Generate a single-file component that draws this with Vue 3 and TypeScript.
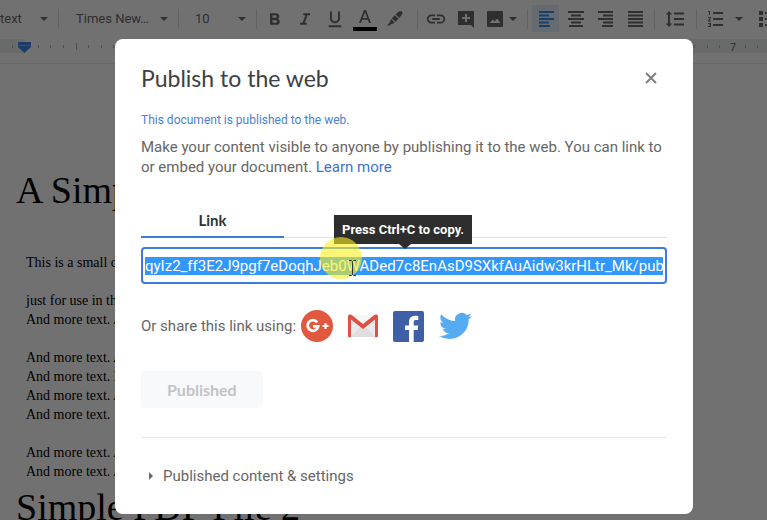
<script setup lang="ts">
import { onMounted, ref } from 'vue'

const linkField = ref<HTMLInputElement | null>(null)
const activeTab = ref<'link' | 'embed'>('link')
const settingsOpen = ref(false)
const link = 'qyIz2_ff3E2J9pgf7eDoqhJeb0WADed7c8EnAsD9SXkfAuAidw3krHLtr_Mk/pub'

const lines: string[] = [
  'This is a small demonstration .pdf file -',
  '',
  'just for use in the Virtual Mechanics tutorials.',
  'And more text. And more text.',
  '',
  'And more text. And more text.',
  'And more text. Boring, zzzzz.',
  'And more text. And more text.',
  'And more text.',
  '',
  'And more text. And more text.',
  'And more text. And more text.',
]

/* Ruler ticks: eighths of an inch, with the half inch drawn taller. */
const inch = 101
const ticks = Array.from({ length: 70 }, (_, i) => i - 1)
  .filter((n) => n % 8 !== 0)
  .map((n) => ({ x: Math.round(25 + (n * inch) / 8), tall: n % 4 === 0 }))

onMounted(() => {
  linkField.value?.focus()
  linkField.value?.select()
})
</script>

<template>
  <div class="editor">
    <div class="toolbar" role="toolbar" aria-label="Formatting">
      <button class="drop style"><span>text</span><i class="caret"></i></button>
      <button class="drop font"><span>Times New…</span><i class="caret"></i></button>
      <button class="drop size"><span>10</span><i class="caret"></i></button>
      <div class="group">
        <button class="tool" aria-label="Bold">
          <svg width="20" height="20" viewBox="0 0 24 24"><path d="M15.6 11.8c1-.7 1.6-1.8 1.6-2.8 0-2.3-1.7-4-4-4H6v14h8c2.1 0 3.7-1.700 3.700-3.800 0-1.500-.9-2.800-2.100-3.400zM9 7.500h3.500c.8 0 1.500.7 1.500 1.500s-.7 1.500-1.500 1.500H9v-3zm4 9H9v-3h4c.8 0 1.500.7 1.500 1.500s-.7 1.500-1.500 1.500z" /></svg>
        </button>
        <button class="tool" aria-label="Italic">
          <svg width="20" height="20" viewBox="0 0 24 24"><path d="M10 5v2.500h2.500l-3.400 9H6V19h8v-2.500h-2.300l3.400-9H18V5z" /></svg>
        </button>
        <button class="tool" aria-label="Underline">
          <svg width="20" height="22" viewBox="0 0 24 26"><path d="M12 18c3.300 0 6-2.700 6-6V4h-2.300v8c0 2.100-1.600 3.800-3.700 3.800S8.300 14.100 8.300 12V4H6v8c0 3.300 2.700 6 6 6zM4.500 20.500v2.300h15v-2.300z" /></svg>
        </button>
        <button class="tool" aria-label="Text colour">
          <svg width="24" height="26" viewBox="0 0 24 26"><path d="M11 4 6 17h2l1.200-3.200h5.600L16 17h2L13 4zm-1.100 8L12 6.300 14.100 12z" /><path class="ink" d="M0 21h24v4H0z" /></svg>
        </button>
        <button class="tool" aria-label="Highlight colour">
          <svg width="18" height="18" viewBox="0 0 18 18"><path d="M12.800 1.600a2.200 2.200 0 0 1 3.200 3l-2.800 3.400-3.600-3.500zM8.800 5.200l3.700 3.600-3 3-3.800-3.600zM5 9l3.600 3.500-1.700 1.300-2 .1-1 1.500H1l2.700-3z" /></svg>
        </button>
      </div>
      <div class="group">
        <button class="tool" aria-label="Insert link">
          <svg width="22" height="22" viewBox="0 0 24 24"><path d="M3.900 12c0-1.700 1.400-3.100 3.100-3.100h4V7H7a5 5 0 0 0 0 10h4v-1.900H7c-1.700 0-3.100-1.400-3.100-3.100zM8 13h8v-2H8zm9-6h-4v1.900h4a3.100 3.100 0 0 1 0 6.200h-4V17h4a5 5 0 0 0 0-10z" /></svg>
        </button>
        <button class="tool" aria-label="Add comment">
          <svg width="18" height="18" viewBox="0 0 18 18"><path fill-rule="evenodd" d="M1 1h16v17l-3-3H1zM8 4v3H5v2h3v3h2V9h3V7h-3V4z" /></svg>
        </button>
        <button class="tool tight" aria-label="Insert image">
          <svg width="18" height="18" viewBox="0 0 18 18"><path fill-rule="evenodd" d="M2 1h14a1 1 0 0 1 1 1v14a1 1 0 0 1-1 1H2a1 1 0 0 1-1-1V2a1 1 0 0 1 1-1zM3.500 13h11l-3.300-4.500-2.400 3L7 9.500z" /></svg>
        </button>
        <i class="caret trailing"></i>
      </div>
      <div class="group aligns">
        <button class="tool on" aria-label="Align left" aria-pressed="true">
          <svg width="16" height="16" viewBox="0 0 16 16"><path d="M1 0h15v2H1zM1 3.500h10v2H1zM1 7h15v2H1zM1 10.500h10v2H1zM1 14h11v2H1z" /></svg>
        </button>
        <button class="tool" aria-label="Align centre">
          <svg width="16" height="16" viewBox="0 0 16 16"><path d="M0 0h16v2H0zM3 3.500h10v2H3zM0 7h16v2H0zM3 10.500h10v2H3zM1 14h14v2H1z" /></svg>
        </button>
        <button class="tool" aria-label="Align right">
          <svg width="16" height="16" viewBox="0 0 16 16"><path d="M0 0h15v2H0zM5 3.500h10v2H5zM0 7h15v2H0zM5 10.500h10v2H5zM4 14h11v2H4z" /></svg>
        </button>
        <button class="tool" aria-label="Justify">
          <svg width="16" height="16" viewBox="0 0 16 16"><path d="M0 0h15v2H0zM0 3.500h15v2H0zM0 7h15v2H0zM0 10.500h15v2H0zM0 14h15v2H0z" /></svg>
        </button>
      </div>
      <div class="group spacing">
        <button class="tool" aria-label="Line spacing">
          <svg width="20" height="18" viewBox="0 0 20 18"><path d="M4 1 .8 4.500H3v9H.8L4 17l3.200-3.500H5v-9h2.200zM9 2.500h10v2H9zM9 8h10v2H9zM9 13.500h10v2H9z" /></svg>
        </button>
      </div>
      <div class="group lists">
        <button class="tool" aria-label="Numbered list">
          <svg width="18" height="16" viewBox="0 0 18 16"><path d="M1 0h2v4H2V1H1zM1 6h3v1L2.300 9.500H4v1H1v-1L2.800 7H1zM1 12h3v4H1v-1h2v-.5H2v-1h1V13H1zM6 1h10v2H6zM6 7h10v2H6zM6 13h10v2H6z" /></svg>
        </button>
        <i class="caret trailing"></i>
        <button class="tool" aria-label="Bulleted list">
          <svg width="18" height="16" viewBox="0 0 18 16"><path d="M0 0h4v4H0zM0 6h4v4H0zM0 12h4v4H0zM6 1h10v2H6zM6 7h10v2H6zM6 13h10v2H6z" /></svg>
        </button>
      </div>
    </div>

    <svg class="ruler" height="14" aria-hidden="true">
      <rect class="margin" width="100%" height="14" />
      <rect class="area" x="25" width="606" height="14" />
      <rect v-for="t in ticks" :key="t.x" class="tick" :x="t.x" :y="t.tall ? 4 : 6" width="1" :height="t.tall ? 7 : 3" />
      <text x="730" y="12">7</text>
      <path class="indent" d="M18 3h13v5l-6.500 6L18 8z" />
      <path class="indent-gap" d="M18 6h13v1H18z" />
    </svg>

    <main class="page">
      <h1>A Simple PDF File</h1>
      <div class="copy">
        <p v-for="(line, i) in lines" :key="i">{{ line }}</p>
      </div>
      <h1>Simple PDF File 2</h1>
    </main>
  </div>

  <div class="backdrop">
    <section class="dialog" role="dialog" aria-modal="true" aria-labelledby="publish-title">
      <header>
        <h2 id="publish-title">Publish to the web</h2>
        <button class="close" aria-label="Close">
          <svg width="12" height="12" viewBox="0 0 12 12"><path d="M1 1l10 10M11 1 1 11" /></svg>
        </button>
      </header>
      <p class="status">This document is published to the web.</p>
      <p class="intro">
        Make your content visible to anyone by publishing it to the web. You can link to or embed your document.
        <a href="#learn">Learn more</a>
      </p>

      <div class="tabs" role="tablist">
        <button role="tab" :class="{ active: activeTab === 'link' }" :aria-selected="activeTab === 'link'" @click="activeTab = 'link'">Link</button>
        <button role="tab" :class="{ active: activeTab === 'embed' }" :aria-selected="activeTab === 'embed'" @click="activeTab = 'embed'">Embed</button>
      </div>

      <div class="field">
        <input ref="linkField" type="text" readonly :value="link" aria-label="Published link" />
        <div class="tip" role="tooltip">Press Ctrl+C to copy.</div>
        <div class="halo"></div>
        <svg class="ibeam" width="9" height="18" viewBox="0 0 9 18" aria-hidden="true"><path d="M1 1.500h2.500l1 1 1-1H8M4.500 2.500v13M1 16.500h2.500l1-1 1 1H8" /></svg>
      </div>

      <div class="share">
        <span>Or share this link using:</span>
        <a href="#google" aria-label="Google+">
          <svg width="32" height="32" viewBox="0 0 32 32">
            <circle cx="16" cy="16" r="16" fill="#e2583e" />
            <path d="M16.200 12.300A5.300 5.300 0 1 0 17.200 16.300H12" fill="none" stroke="#fff" stroke-width="2.800" />
            <path d="M24.500 13v6M21.500 16h6" fill="none" stroke="#fff" stroke-width="2" />
          </svg>
        </a>
        <a href="#gmail" aria-label="Gmail">
          <svg width="32" height="32" viewBox="0 0 32 32">
            <path d="M3 5h26v22H3z" fill="#ebebeb" />
            <path d="M4 27 13 17l3 2 3-2 9 10z" fill="#dedede" />
            <path d="M3 5h26L16 16z" fill="#f6f6f6" />
            <path d="M1 6.500C1 4.500 3.500 4 5 5.200L16 14 27 5.200c1.500-1.200 4-.7 4 1.300V26a1.200 1.200 0 0 1-1.200 1.200H28V9.500L16 19 4 9.500v17.700H2.200A1.200 1.200 0 0 1 1 26z" fill="#dd5044" />
          </svg>
        </a>
        <a href="#facebook" aria-label="Facebook">
          <svg width="32" height="32" viewBox="0 0 32 32">
            <rect y="1" width="31" height="31" rx="2" fill="#3f5fa8" />
            <path d="M16 32V20H12v-4.500h4v-3.600c0-4 2.500-6.200 6.100-6.200 1.400 0 2.600.1 3.200.2v4.100H23c-1.900 0-2.300.9-2.300 2.300v3.200h4.500l-.6 4.500h-3.900v12z" fill="#fff" />
          </svg>
        </a>
        <a href="#twitter" aria-label="Twitter">
          <svg width="33" height="32" viewBox="0 0 24 24" preserveAspectRatio="none">
            <path d="M23.953 4.570a10 10 0 0 1-2.825.775 4.958 4.958 0 0 0 2.163-2.723c-.951.555-2.005.959-3.127 1.184a4.920 4.920 0 0 0-8.384 4.482C7.690 8.095 4.067 6.130 1.640 3.162a4.822 4.822 0 0 0-.666 2.475c0 1.710.870 3.213 2.188 4.096a4.904 4.904 0 0 1-2.228-.616v.060a4.923 4.923 0 0 0 3.946 4.827 4.996 4.996 0 0 1-2.212.085 4.936 4.936 0 0 0 4.604 3.417 9.867 9.867 0 0 1-6.102 2.105c-.390 0-.779-.023-1.170-.067a13.995 13.995 0 0 0 7.557 2.209c9.053 0 13.998-7.496 13.998-13.985 0-.210 0-.420-.015-.630A9.935 9.935 0 0 0 24 4.590z" fill="#55acf3" />
          </svg>
        </a>
      </div>

      <button class="publish" disabled>Published</button>
      <hr />
      <button class="settings" :aria-expanded="settingsOpen" @click="settingsOpen = !settingsOpen">
        <svg width="4" height="8" viewBox="0 0 4 8"><path d="M0 0l4 4-4 4z" /></svg>
        Published content &amp; settings
      </button>
    </section>
  </div>
</template>

<style>
body {
  margin: 0;
  overflow: hidden;
}
</style>

<style scoped>
* {
  box-sizing: border-box;
}
button {
  margin: 0;
  padding: 0;
  border: 0;
  background: none;
  font-family: inherit;
  cursor: pointer;
}
p,
h1,
h2 {
  margin: 0;
  font-weight: 400;
}

/* Document editor behind the dialog */
.editor {
  height: 100vh;
  overflow: hidden;
  background: #fdfbfd;
  font-family: Roboto, 'Liberation Sans', sans-serif;
}
.toolbar {
  display: flex;
  align-items: center;
  height: 39px;
  padding-bottom: 2px;
  overflow: hidden;
  color: #68666a;
  fill: #68666a;
}
.drop {
  display: flex;
  flex: none;
  align-items: center;
  justify-content: space-between;
  height: 20px;
  padding-right: 10px;
  border-right: 1px solid #dadada;
  color: inherit;
  font-size: 13px;
}
.style {
  width: 59px;
}
.font {
  width: 120px;
  padding-left: 17px;
}
.size {
  width: 78px;
  padding-left: 16px;
}
.caret {
  flex: none;
  border: 4px solid transparent;
  border-top-color: #68666a;
  border-bottom: 0;
}
.trailing {
  margin-right: 10px;
}
.group {
  display: flex;
  flex: none;
  align-items: center;
  height: 20px;
  padding-left: 3px;
  border-right: 1px solid #dadada;
}
.group:nth-child(4) {
  padding-right: 7px;
}
.aligns {
  padding-right: 3px;
}
.spacing {
  padding: 0 6px 0 5px;
}
.lists {
  padding-left: 4px;
}
.lists .caret {
  margin-left: 4px;
}
.tool {
  display: flex;
  flex: none;
  align-items: center;
  justify-content: center;
  width: 30px;
  height: 27px;
}
.tight {
  width: 28px;
}
.on {
  width: 27px;
  margin: 0 2px 0 1px;
  background: #dfeefb;
  fill: #3c8ae6;
}
.ink {
  fill: #000;
}
.ruler {
  display: block;
  width: 100%;
}
.margin {
  fill: #e8eeee;
}
.area {
  fill: #fdfbfd;
}
.tick {
  fill: #b0b0b2;
}
.ruler text {
  fill: #68666a;
  font-size: 11px;
}
.indent {
  fill: #3f83e2;
}
.indent-gap {
  fill: #7fb0f0;
}
.page {
  margin-top: 10px;
  padding: 104px 16px 0;
  border-top: 1px solid #e8e4e6;
  color: #000;
  font-family: 'Liberation Serif', serif;
  white-space: nowrap;
}
h1 {
  font-size: 38px;
  line-height: 44px;
}
.copy {
  padding: 41px 10px 4px;
  font-size: 14px;
  line-height: 19px;
}
.copy p {
  height: 19px;
}

/* Dialog */
.backdrop {
  position: fixed;
  inset: 0;
  display: flex;
  align-items: flex-start;
  padding: 39px 74px 6px 115px;
  background: rgba(0, 0, 0, 0.55);
  font-family: Roboto, 'Liberation Sans', sans-serif;
}
.dialog {
  flex: 1;
  padding: 24px 26px 28px;
  border-radius: 8px;
  background: #fff;
  color: #666;
  font-size: 15px;
  line-height: 20px;
}
header {
  display: flex;
  align-items: center;
  justify-content: space-between;
}
h2 {
  color: #3c4043;
  font-family: Lato, sans-serif;
  font-size: 23px;
  line-height: 30px;
}
.close {
  display: flex;
  padding: 10px;
  margin: -10px 0;
  fill: none;
  stroke: #808080;
  stroke-width: 2;
}
.status {
  margin-top: 19px;
  color: #4a80d8;
  font-size: 12px;
  line-height: 16px;
}
.intro {
  margin-top: 9px;
}
.intro a {
  color: #3c73cc;
  text-decoration: none;
}
.tabs {
  display: flex;
  margin-top: 27px;
  box-shadow: inset 0 -1px #e0e0e0;
}
.tabs button {
  width: 143px;
  height: 34px;
  border-bottom: 2px solid transparent;
  color: #5f6368;
  font-family: Lato, sans-serif;
  font-size: 15px;
}
.tabs .active {
  border-bottom-color: #3b7ddd;
  color: #303236;
  font-weight: 700;
}
.field {
  position: relative;
  margin-top: 9px;
}
input {
  display: block;
  width: 100%;
  height: 37px;
  padding: 0 2px;
  border: 2px solid #3b7ddd;
  border-radius: 4px;
  outline: 0;
  color: #444;
  font: 15px/18px Roboto, 'Liberation Sans', sans-serif;
}
input::selection {
  background: #3297fd;
  color: #fff;
}
.tip {
  position: absolute;
  left: 193px;
  bottom: 40px;
  padding: 0 8px;
  background: #2d2d2d;
  color: #fff;
  font-size: 13px;
  font-weight: 700;
  line-height: 29px;
}
.tip::after {
  position: absolute;
  top: 100%;
  left: 65px;
  border: 6px solid transparent;
  border-top: 5px solid #2d2d2d;
  border-bottom: 0;
  content: '';
}
.halo {
  position: absolute;
  top: -10px;
  left: 179px;
  width: 42px;
  height: 42px;
  border-radius: 50%;
  background: rgba(250, 240, 30, 0.6);
}
.ibeam {
  position: absolute;
  top: 12px;
  left: 207px;
  fill: none;
  stroke: #333;
}
.share {
  display: flex;
  align-items: center;
  gap: 14px;
  margin-top: 26px;
}
.share span {
  margin-right: -9px;
}
.share a {
  display: flex;
}
.publish {
  display: block;
  margin-top: 29px;
  padding: 0 26px;
  border-radius: 4px;
  background: #f8f9fb;
  color: #c2c3c7;
  font-family: Lato, sans-serif;
  font-size: 16px;
  font-weight: 700;
  line-height: 37px;
}
hr {
  height: 1px;
  margin: 29px 0 28px;
  border: 0;
  background: #e8e8e8;
}
.settings {
  display: flex;
  align-items: center;
  gap: 10px;
  padding-left: 8px;
  color: #666;
  fill: #666;
  font-size: 15px;
  line-height: 20px;
}
</style>
